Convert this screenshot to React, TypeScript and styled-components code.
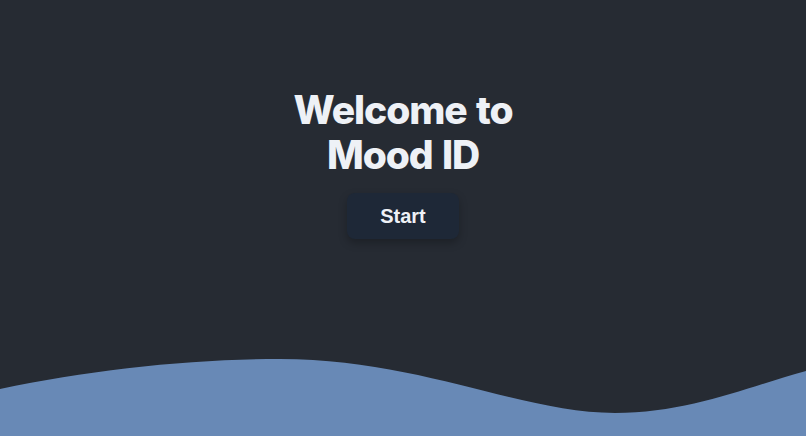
import styled, { createGlobalStyle } from 'styled-components';

const GlobalStyle = createGlobalStyle`
  html, body, #root {
    margin: 0;
    height: 100%;
  }

  body {
    background: #262b33;
    font-family: Inter, "Noto Sans", sans-serif;
    overflow: hidden;
  }
`;

const App: React.FC = () => {
  return (
    <>
      <GlobalStyle />
      <Page>
        <Hero>
          <Title>
            Welcome to
            <br />
            Mood ID
          </Title>
          <StartButton type="button">Start</StartButton>
        </Hero>
        <Wave viewBox="0 0 806 80" preserveAspectRatio="none" aria-hidden="true">
          <path
            d="M0 33 C 90 14, 190 3, 280 3 C 420 3, 520 57, 615 57 C 690 57, 750 30, 806 15 L 806 80 L 0 80 Z"
            fill="#6889b6"
          />
        </Wave>
      </Page>
    </>
  );
};

const Page = styled.main`
  position: relative;
  width: 100%;
  height: 100%;
  overflow: hidden;
`;

const Hero = styled.section`
  padding-top: 87px;

  display: flex;
  flex-direction: column;
  align-items: center;
  gap: 16px;
`;

const Title = styled.h1`
  margin: 0;
  color: #eef1f6;
  font-size: 39px;
  font-weight: 800;
  line-height: 45px;
  letter-spacing: -1.1px;
  word-spacing: 2px;
  text-align: center;
`;

const StartButton = styled.button`
  width: 112px;
  height: 46px;
  border: none;
  border-radius: 8px;
  background: #1e2837;
  box-shadow: 0 4px 8px rgba(0, 0, 0, 0.25);
  color: #eef1f6;
  font-family: "Liberation Sans", Arial, sans-serif;
  font-size: 20px;
  font-weight: 700;
  cursor: pointer;
`;

const Wave = styled.svg`
  position: absolute;
  left: 0;
  bottom: 0;
  width: 100%;
  height: 80px;
  display: block;
`;

export default App;
